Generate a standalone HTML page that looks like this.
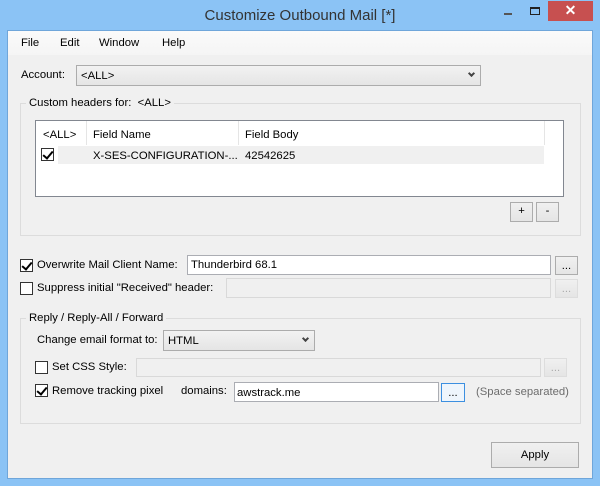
<!DOCTYPE html>
<html><head><style>
*{margin:0;padding:0;box-sizing:border-box}
body{width:600px;height:486px;background:#8bc3f5;position:relative;overflow:hidden;font-family:"Liberation Sans",sans-serif;font-size:11.3px;color:#000}
.a{position:absolute}
.client{left:7px;top:30px;width:586px;height:449px;background:#f0f0f0;border:1px solid #6fa6da}
.t{position:absolute;white-space:nowrap;line-height:14px}
.box{position:absolute;background:#fff;border:1px solid #abadb3}
.dis{background:#f0f0f0;border-color:#d9d9d9}
.btn{position:absolute;background:linear-gradient(#f0f0f0,#e5e5e5);border:1px solid #acacac;text-align:center}
.cb{position:absolute;width:13px;height:13px;border:1px solid #333;background:#fff}
.cb.on::after{content:"";position:absolute;left:3px;top:0px;width:4px;height:8px;border:solid #000;border-width:0 2px 2px 0;transform:rotate(40deg)}
.grp{position:absolute;border:1px solid #dcdcdc}
.combo{position:absolute;background:linear-gradient(#f2f2f2,#e5e5e5);border:1px solid #acacac}
.arr{position:absolute;right:6px;top:5px;width:5px;height:5px;border:solid #444;border-width:0 2px 2px 0;transform:rotate(45deg)}
</style></head><body>
<div class="t" style="left:0;width:600px;text-align:center;top:7px;font-size:15px;color:#333;line-height:17px">Customize Outbound Mail [*]</div>
<div class="a" style="left:504px;top:13px;width:8px;height:2px;background:#555"></div>
<div class="a" style="left:530px;top:7px;width:10px;height:8px;border:1px solid #222;border-top-width:2px"></div>
<div class="a" style="left:548px;top:1px;width:45px;height:20px;background:#c75050"></div>
<div class="t" style="left:548px;width:45px;text-align:center;top:3px;color:#fff;font-weight:bold;font-size:14px">✕</div>
<div class="a client"></div>
<div class="a" style="left:8px;top:31px;width:584px;height:24px;background:linear-gradient(#fafafa,#f5f5f5)"></div>
<div class="t" style="left:21px;top:36px">File</div>
<div class="t" style="left:60px;top:36px">Edit</div>
<div class="t" style="left:99px;top:36px">Window</div>
<div class="t" style="left:162px;top:36px">Help</div>

<div class="t" style="left:21px;top:68px">Account:</div>
<div class="combo" style="left:76px;top:65px;width:405px;height:21px"><div class="t" style="left:4px;top:3px">&lt;ALL&gt;</div><div class="arr"></div></div>

<div class="grp" style="left:20px;top:103px;width:561px;height:133px"></div>
<div class="t" style="left:26px;top:96px;background:#f0f0f0;padding:0 3px">Custom headers for:&nbsp; &lt;ALL&gt;</div>
<div class="box" style="left:35px;top:120px;width:529px;height:77px;border-color:#828790">
 <div class="a" style="left:50px;top:0;width:1px;height:24px;background:#e5e5e5"></div>
 <div class="a" style="left:202px;top:0;width:1px;height:24px;background:#e5e5e5"></div>
 <div class="a" style="left:508px;top:0;width:1px;height:24px;background:#e5e5e5"></div>
 <div class="t" style="left:7px;top:7px">&lt;ALL&gt;</div>
 <div class="t" style="left:57px;top:7px">Field Name</div>
 <div class="t" style="left:209px;top:7px">Field Body</div>
 <div class="a" style="left:22px;top:25px;width:486px;height:18px;background:#f0f0f0"></div>
 <div class="cb on" style="left:5px;top:27px"></div>
 <div class="t" style="left:57px;top:28px">X-SES-CONFIGURATION-...</div>
 <div class="t" style="left:209px;top:28px">42542625</div>
</div>
<div class="btn" style="left:510px;top:202px;width:23px;height:20px;line-height:17px">+</div>
<div class="btn" style="left:536px;top:202px;width:23px;height:20px;line-height:17px">-</div>

<div class="cb on" style="left:20px;top:259px"></div>
<div class="t" style="left:37px;top:258px">Overwrite Mail Client Name:</div>
<div class="box" style="left:187px;top:255px;width:364px;height:20px"><div class="t" style="left:3px;top:2px">Thunderbird 68.1</div></div>
<div class="btn" style="left:555px;top:256px;width:23px;height:19px;line-height:18px">...</div>
<div class="cb" style="left:20px;top:282px"></div>
<div class="t" style="left:37px;top:281px">Suppress initial "Received" header:</div>
<div class="box dis" style="left:226px;top:278px;width:325px;height:20px"></div>
<div class="btn" style="left:555px;top:279px;width:23px;height:19px;line-height:18px;color:#aaa;border-color:#ddd">...</div>

<div class="grp" style="left:20px;top:318px;width:561px;height:106px"></div>
<div class="t" style="left:26px;top:311px;background:#f0f0f0;padding:0 3px">Reply / Reply-All / Forward</div>
<div class="t" style="left:37px;top:333px">Change email format to:</div>
<div class="combo" style="left:163px;top:330px;width:152px;height:21px"><div class="t" style="left:4px;top:3px">HTML</div><div class="arr"></div></div>
<div class="cb" style="left:35px;top:361px"></div>
<div class="t" style="left:52px;top:360px">Set CSS Style:</div>
<div class="box dis" style="left:136px;top:358px;width:405px;height:19px"></div>
<div class="btn" style="left:544px;top:358px;width:23px;height:19px;line-height:18px;color:#aaa;border-color:#ddd">...</div>
<div class="cb on" style="left:35px;top:384px"></div>
<div class="t" style="left:52px;top:384px">Remove tracking pixel</div>
<div class="t" style="left:181px;top:384px">domains:</div>
<div class="box" style="left:234px;top:382px;width:205px;height:20px"><div class="t" style="left:2px;top:3px">awstrack.me</div></div>
<div class="btn" style="left:441px;top:383px;width:24px;height:19px;line-height:18px;border-color:#3c8fe0;background:#eef5fc">...</div>
<div class="t" style="left:476px;top:385px;color:#6d6d6d">(Space separated)</div>

<div class="btn" style="left:491px;top:442px;width:88px;height:26px;line-height:24px">Apply</div>
</body></html>
